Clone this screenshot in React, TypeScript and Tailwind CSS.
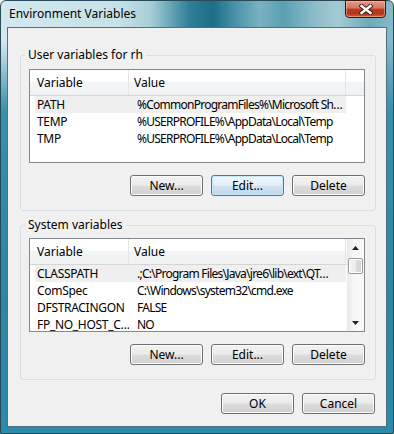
import { ReactNode } from "react";

const font = { fontFamily: '"Noto Sans", "Open Sans", sans-serif' };

const Button = ({ children, focused }: { children: ReactNode; focused?: boolean }) => (
  <div
    className={
      "w-[73px] h-[21px] rounded-[3px] border flex items-center justify-center text-[12px] text-black leading-none " +
      (focused
        ? "border-[#3c7fb1] bg-[linear-gradient(180deg,#f2f8fc_0%,#e3eff7_48%,#cfe4f1_52%,#bcd9ec_100%)] shadow-[inset_0_0_0_1px_#c9e6f7]"
        : "border-[#707070] bg-[linear-gradient(180deg,#f2f2f2_0%,#ebebeb_48%,#dddddd_52%,#cfcfcf_100%)] shadow-[inset_0_0_0_1px_#fcfcfc]")
    }
  >
    {children}
  </div>
);

const Header = ({ filler }: { filler: boolean }) => (
  <div className="h-[26px] flex shrink-0 border-b border-[#d5d5d5] bg-[linear-gradient(180deg,#ffffff_0%,#ffffff_45%,#f3f4f6_50%,#f1f2f4_100%)]">
    <div className="w-[99px] border-r border-[#e3e5e8] pl-[7px] flex items-center">Variable</div>
    <div className="w-[217px] border-r border-[#e3e5e8] pl-[5px] flex items-center">Value</div>
    {filler && <div className="flex-1" />}
  </div>
);

type Row = { name: string; value: string };

const Rows = ({ rows }: { rows: Row[] }) => (
  <div className="flex flex-col">
    {rows.map((r, i) => (
      <div key={r.name} className={"ml-[5px] w-[311px] h-[17px] flex items-center shrink-0 " + (i === 0 ? "bg-[#efefef]" : "")}>
        <div className="w-[94px] pl-[2px] tracking-[-0.3px] overflow-hidden whitespace-nowrap">{r.name}</div>
        <div className="w-[217px] pl-[8px] tracking-[-0.75px] overflow-hidden whitespace-nowrap">{r.value}</div>
      </div>
    ))}
  </div>
);

const Arrow = ({ up }: { up?: boolean }) => (
  <svg width="7" height="4" viewBox="0 0 7 4">
    <path d={up ? "M0 4 L3.5 0 L7 4 Z" : "M0 0 L3.5 4 L7 0 Z"} fill="#222" />
  </svg>
);

const Scrollbar = () => (
  <div className="w-[17px] flex flex-col items-center bg-[linear-gradient(90deg,#e9e9e9_0%,#f6f6f6_40%,#fafafa_100%)]">
    <div className="h-[17px] w-full flex items-center justify-center">
      <Arrow up />
    </div>
    <div className="mt-[2px] w-[15px] h-[16px] rounded-[2px] border border-[#9b9b9b] bg-[linear-gradient(90deg,#f5f5f5_0%,#ececec_50%,#dbdbdb_51%,#d6d6d6_100%)] shadow-[inset_0_0_0_1px_#ffffff]" />
    <div className="flex-1" />
    <div className="h-[17px] w-full flex items-center justify-center">
      <Arrow />
    </div>
  </div>
);

const Group = ({ label, children, height }: { label: string; children: ReactNode; height: string }) => (
  <div className={"relative border border-[#d5dfe5] rounded-[3px] " + height}>
    <div className="absolute -top-[9px] left-[4px] px-[3px] bg-[#f0f0f0] text-[12px] leading-[16px]">{label}</div>
    {children}
  </div>
);

const userRows: Row[] = [
  { name: "PATH", value: "%CommonProgramFiles%\\Microsoft Sh…" },
  { name: "TEMP", value: "%USERPROFILE%\\AppData\\Local\\Temp" },
  { name: "TMP", value: "%USERPROFILE%\\AppData\\Local\\Temp" },
];

const systemRows: Row[] = [
  { name: "CLASSPATH", value: ".;C:\\Program Files\\Java\\jre6\\lib\\ext\\QT…" },
  { name: "ComSpec", value: "C:\\Windows\\system32\\cmd.exe" },
  { name: "DFSTRACINGON", value: "FALSE" },
  { name: "FP_NO_HOST_C…", value: "NO" },
];

export default function App() {
  return (
    <div className="w-[394px] h-[434px] bg-white" style={font}>
      <div className="relative w-[394px] h-[434px] flex flex-col rounded-t-[6px] border border-[#2a4a57] bg-[linear-gradient(180deg,rgba(210,232,238,0)_0px,rgba(210,232,238,0)_40px,#3a8faa_110px,#2f86a2_300px,#2a8bab_100%),linear-gradient(90deg,#d3e8ee_0%,#c6e1e8_30%,#a9cfd9_38%,#2f7f98_48%,#1c6d88_54%,#4b93aa_60%,#79b2c1_66%,#5a9fb3_72%,#8cbcc9_80%,#a4cad4_86%,#6ea9ba_94%,#8ab9c7_100%)]">
        <div className="h-[26px] shrink-0 pl-[8px] pt-[5px] text-[12px] leading-[16px] text-black">Environment Variables</div>

        <div className="absolute -top-[1px] right-[7px] w-[41px] h-[18px] rounded-b-[4px] border border-[#3f140b] bg-[linear-gradient(180deg,#e39a88_0%,#d57561_45%,#bb3a1e_50%,#b5351a_78%,#d0603a_100%)] shadow-[inset_0_0_0_1px_rgba(255,210,190,0.45)] flex items-center justify-center">
          <svg width="14" height="11" viewBox="0 0 14 11">
            <path d="M2.5 2 L11.5 9 M11.5 2 L2.5 9" stroke="#3a1a12" strokeWidth="4.2" strokeLinecap="square" />
            <path d="M2.5 2 L11.5 9 M11.5 2 L2.5 9" stroke="#ffffff" strokeWidth="2.4" strokeLinecap="square" />
          </svg>
        </div>

        <div className="flex-1 mx-[6px] mb-[6px] border border-[#50707d] bg-[#f0f0f0] pt-[27px] pl-[12px] pr-[10px] text-[12px] text-black">
          <Group label="User variables for rh" height="h-[156px]">
            <div className="pt-[13px] pl-[8px] pr-[10px]">
              <div className="h-[94px] border border-[#828790] bg-white flex flex-col overflow-hidden">
                <Header filler />
                <Rows rows={userRows} />
              </div>
              <div className="mt-[12px] flex justify-end gap-[8px]">
                <Button>New...</Button>
                <Button focused>Edit...</Button>
                <Button>Delete</Button>
              </div>
            </div>
          </Group>

          <div className="mt-[14px]">
            <Group label="System variables" height="h-[155px]">
              <div className="pt-[12px] pl-[8px] pr-[10px]">
                <div className="h-[94px] border border-[#828790] bg-white flex overflow-hidden">
                  <div className="flex-1 flex flex-col overflow-hidden">
                    <Header filler={false} />
                    <Rows rows={systemRows} />
                  </div>
                  <Scrollbar />
                </div>
                <div className="mt-[12px] flex justify-end gap-[8px]">
                  <Button>New...</Button>
                  <Button>Edit...</Button>
                  <Button>Delete</Button>
                </div>
              </div>
            </Group>
          </div>

          <div className="mt-[13px] pr-[1px] flex justify-end gap-[8px]">
            <Button>OK</Button>
            <Button>Cancel</Button>
          </div>
        </div>
      </div>
    </div>
  );
}
